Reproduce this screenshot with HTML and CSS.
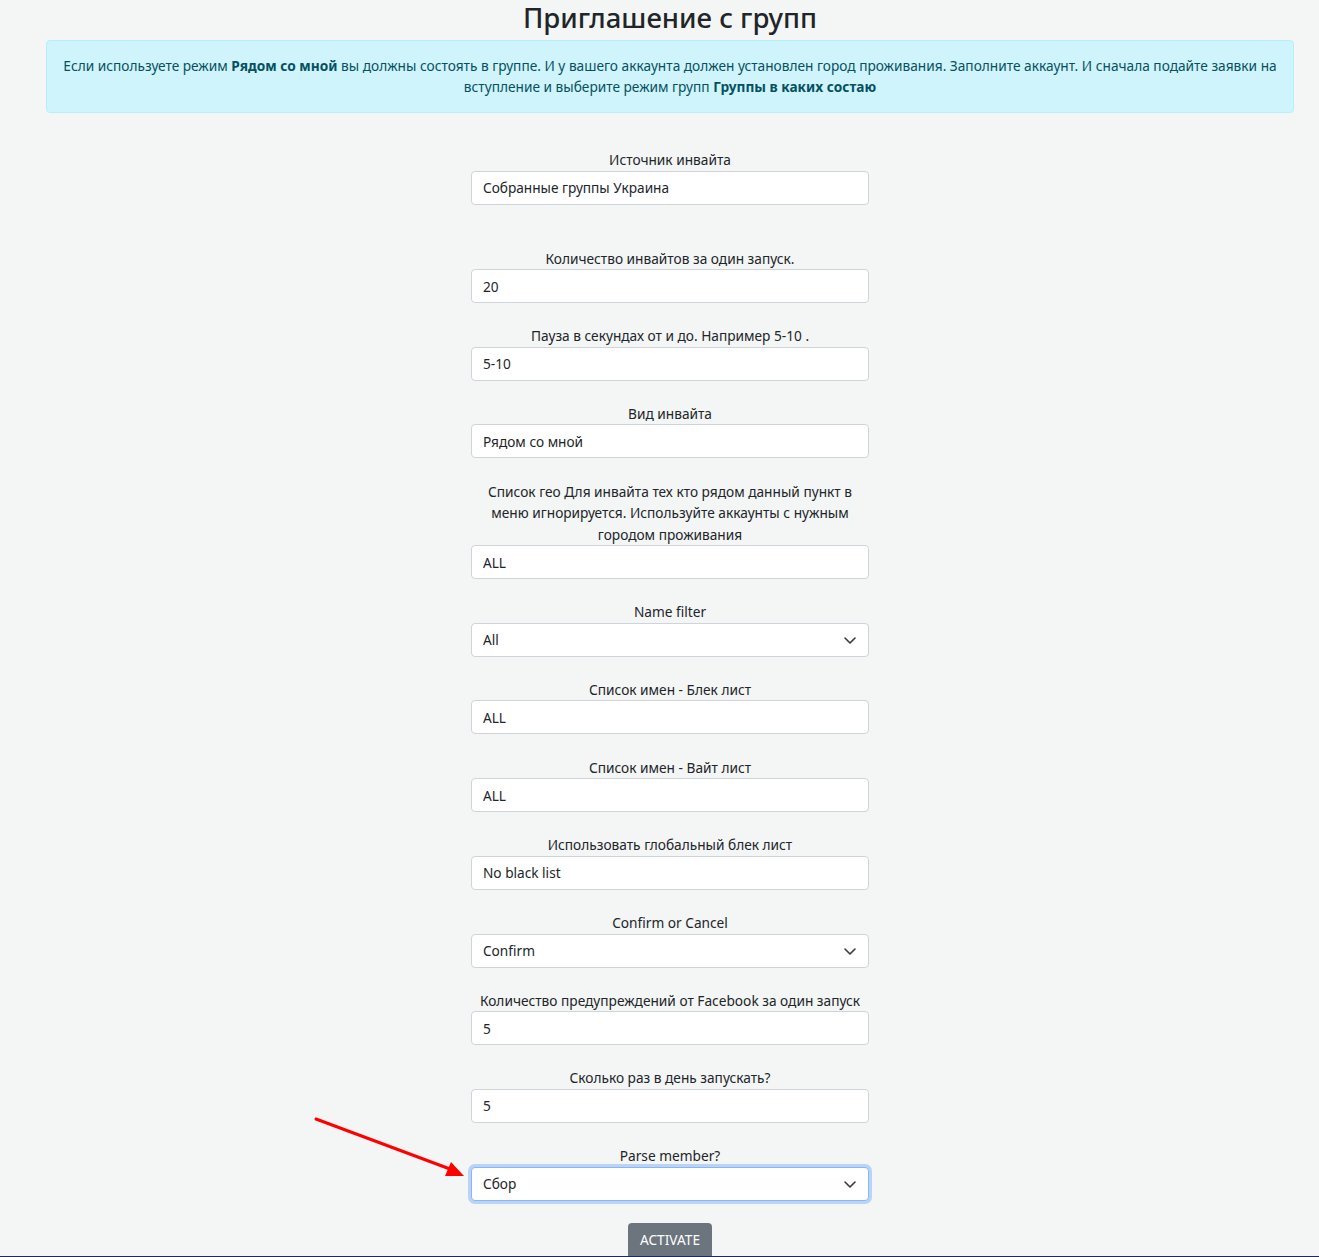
FILE: index.html
```html
<!DOCTYPE html>
<html lang="ru">

<head>
    <title>Приглашение с групп</title>
    <meta charset="utf-8">
    <meta name="viewport" content="width=device-width, initial-scale=1.0">
    <link rel="stylesheet" href="styles.css">
</head>

<body>
    <div class="page">
        <h1 class="title">Приглашение с групп</h1>

        <div class="alert">
            Если используете режим <b>Рядом со мной</b> вы должны состоять в группе. И у вашего аккаунта должен установлен город проживания. Заполните аккаунт. И сначала подайте заявки на вступление и выберите режим групп <b>Группы в каких состаю</b>
        </div>

        <form class="invite-form" onsubmit="return false">
            <div class="field field-first">
                <label for="source">Источник инвайта</label>
                <input class="control" id="source" type="text" value="Собранные группы Украина">
            </div>
            <div class="field">
                <label for="count">Количество инвайтов за один запуск.</label>
                <input class="control" id="count" type="text" value="20">
            </div>
            <div class="field">
                <label for="pause">Пауза в секундах от и до. Например 5-10 .</label>
                <input class="control" id="pause" type="text" value="5-10">
            </div>
            <div class="field">
                <label for="kind">Вид инвайта</label>
                <input class="control" id="kind" type="text" value="Рядом со мной">
            </div>
            <div class="field">
                <label for="geo">Список гео Для инвайта тех кто рядом данный пункт в меню игнорируется. Используйте аккаунты с нужным городом проживания</label>
                <input class="control" id="geo" type="text" value="ALL">
            </div>
            <div class="field">
                <label for="namefilter">Name filter</label>
                <div class="select-wrap">
                    <select class="control" id="namefilter">
                        <option>All</option>
                    </select>
                    <svg class="chevron" viewBox="0 0 12 7" width="12" height="7"><path d="M1 1l5 5 5-5" fill="none" stroke="#343a40" stroke-width="1.6" stroke-linecap="round" stroke-linejoin="round"/></svg>
                </div>
            </div>
            <div class="field">
                <label for="black">Список имен - Блек лист</label>
                <input class="control" id="black" type="text" value="ALL">
            </div>
            <div class="field">
                <label for="white">Список имен - Вайт лист</label>
                <input class="control" id="white" type="text" value="ALL">
            </div>
            <div class="field">
                <label for="global">Использовать глобальный блек лист</label>
                <input class="control" id="global" type="text" value="No black list">
            </div>
            <div class="field">
                <label for="confirm">Confirm or Cancel</label>
                <div class="select-wrap">
                    <select class="control" id="confirm">
                        <option>Confirm</option>
                    </select>
                    <svg class="chevron" viewBox="0 0 12 7" width="12" height="7"><path d="M1 1l5 5 5-5" fill="none" stroke="#343a40" stroke-width="1.6" stroke-linecap="round" stroke-linejoin="round"/></svg>
                </div>
            </div>
            <div class="field">
                <label for="warnings">Количество предупреждений от Facebook за один запуск</label>
                <input class="control" id="warnings" type="text" value="5">
            </div>
            <div class="field">
                <label for="perday">Сколько раз в день запускать?</label>
                <input class="control" id="perday" type="text" value="5">
            </div>
            <div class="field">
                <label for="parse">Parse member?</label>
                <div class="select-wrap">
                    <select class="control focused" id="parse">
                        <option>Сбор</option>
                    </select>
                    <svg class="chevron" viewBox="0 0 12 7" width="12" height="7"><path d="M1 1l5 5 5-5" fill="none" stroke="#343a40" stroke-width="1.6" stroke-linecap="round" stroke-linejoin="round"/></svg>
                </div>
            </div>
            <div class="actions">
                <button class="btn-activate" type="submit">Activate</button>
            </div>
        </form>

        <!-- annotation arrow pointing at the Parse member select -->
        <svg class="arrow" width="170" height="75" viewBox="0 0 170 75">
            <line x1="16" y1="14" x2="150" y2="64" stroke="#f00" stroke-width="3" stroke-linecap="round"/>
            <polygon points="164,71 145,71 151,57" fill="#f00"/>
        </svg>
    </div>
</body>

</html>
```

FILE: styles.css
```css
html, body {
    margin: 0;
    padding: 0;
}

body {
    background-color: #f4f5f5;
    color: #212529;
    font-family: "Noto Sans", "Open Sans", sans-serif;
    font-size: 13.7px;
    line-height: 21.5px;
}

.page {
    position: relative;
    height: calc(100vh - 1px);
    overflow: hidden;
    padding: 0 25px 0 46px;
    border-bottom: 1px solid #1c2b5e;
}

.title {
    margin: 0 0 5px;
    font-size: 27.5px;
    line-height: 35px;
    font-weight: 500;
    text-align: center;
}

.alert {
    padding: 14px 10px 15px;
    background-color: #cff4fc;
    border: 1px solid #b6effb;
    border-radius: 4px;
    color: #055160;
    line-height: 21px;
    text-align: center;
}

.alert b {
    font-weight: 700;
}

.invite-form {
    width: 398px;
    margin: 36px auto 0;
}

.field {
    display: flex;
    flex-direction: column;
    margin-bottom: 22.2px;
}

.field-first {
    margin-bottom: 43px;
}

.field label {
    text-align: center;
}

.control {
    box-sizing: border-box;
    width: 100%;
    height: 34px;
    padding: 0 11px;
    font-family: inherit;
    font-size: 13.65px;
    color: #212529;
    background-color: #fff;
    border: 1px solid #ced4da;
    border-radius: 4px;
    outline: none;
}

select.control {
    appearance: none;
    -webkit-appearance: none;
}

.select-wrap {
    position: relative;
}

.chevron {
    position: absolute;
    right: 13px;
    top: 14px;
}

.focused {
    border-color: #86b7fe;
    box-shadow: 0 0 0 3px rgba(13, 110, 253, 0.25);
}

.actions {
    display: flex;
    justify-content: center;
}

.btn-activate {
    padding: 6px 12px 10px;
    background-color: #6c757d;
    color: #fff;
    border: 0;
    border-radius: 4px;
    font-family: inherit;
    font-size: 13.7px;
    line-height: 21px;
    text-transform: uppercase;
}

.arrow {
    position: absolute;
    left: 300px;
    top: 1105px;
}
```
